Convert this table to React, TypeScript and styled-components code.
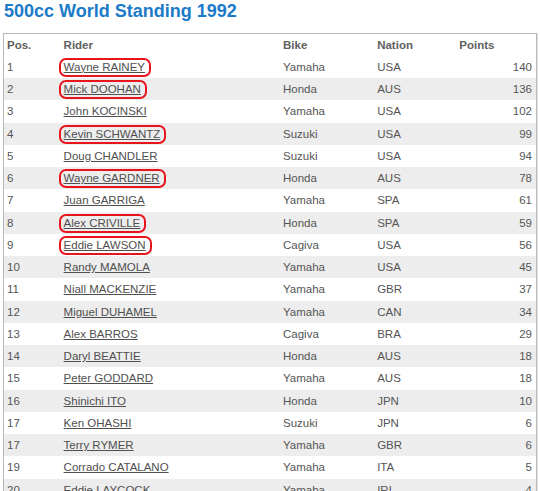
import React from "react";
import styled, { createGlobalStyle } from "styled-components";

const Global = createGlobalStyle`
  html, body { margin: 0; padding: 0; background: #fff; }
  body { font-family: "Liberation Sans", Arial, sans-serif; }
`;

const Page = styled.div`
  padding: 0 3px;
  width: 534px;
`;

const Title = styled.h1`
  margin: 0 0 11px 1px;
  font-size: 18px;
  line-height: 22px;
  font-weight: bold;
  color: #1b7bc8;
`;

const Table = styled.table`
  width: 534px;
  border-collapse: collapse;
  table-layout: fixed;
  border: 1px solid #b8b8b8;
  border-bottom: none;
  box-shadow: 1px 0 0 #e2e2e2;
  font-size: 11.5px;
  color: #555;
`;

const Row = styled.tr<{ $shade?: boolean }>`
  height: 22.25px;
  background: ${(p) => (p.$shade ? "#ededed" : "#fff")};
`;

const Th = styled.th<{ $w: number }>`
  box-sizing: border-box;
  width: ${(p) => p.$w}px;
  text-align: left;
  font-weight: bold;
  color: #606060;
  padding: 0 0 0 3px;
  line-height: 14px;
`;

const Td = styled.td<{ $right?: boolean }>`
  box-sizing: border-box;
  padding: 0 ${(p) => (p.$right ? "4px" : "0")} 0 3px;
  text-align: ${(p) => (p.$right ? "right" : "left")};
  line-height: 14px;
  white-space: nowrap;
`;

const RiderLink = styled.a<{ $marked?: boolean }>`
  position: relative;
  color: #4f4f4f;
  text-decoration: underline;
  &::after {
    content: "";
    display: ${(p) => (p.$marked ? "block" : "none")};
    position: absolute;
    left: -5px;
    right: -6px;
    top: -3px;
    bottom: -4px;
    border: 2px solid #e8141c;
    border-radius: 7px;
  }
`;

type R = [string, string, string, string, number, boolean?];

const rows: R[] = [
  ["1", "Wayne RAINEY", "Yamaha", "USA", 140, true],
  ["2", "Mick DOOHAN", "Honda", "AUS", 136, true],
  ["3", "John KOCINSKI", "Yamaha", "USA", 102],
  ["4", "Kevin SCHWANTZ", "Suzuki", "USA", 99, true],
  ["5", "Doug CHANDLER", "Suzuki", "USA", 94],
  ["6", "Wayne GARDNER", "Honda", "AUS", 78, true],
  ["7", "Juan GARRIGA", "Yamaha", "SPA", 61],
  ["8", "Alex CRIVILLE", "Honda", "SPA", 59, true],
  ["9", "Eddie LAWSON", "Cagiva", "USA", 56, true],
  ["10", "Randy MAMOLA", "Yamaha", "USA", 45],
  ["11", "Niall MACKENZIE", "Yamaha", "GBR", 37],
  ["12", "Miguel DUHAMEL", "Yamaha", "CAN", 34],
  ["13", "Alex BARROS", "Cagiva", "BRA", 29],
  ["14", "Daryl BEATTIE", "Honda", "AUS", 18],
  ["15", "Peter GODDARD", "Yamaha", "AUS", 18],
  ["16", "Shinichi ITO", "Honda", "JPN", 10],
  ["17", "Ken OHASHI", "Suzuki", "JPN", 6],
  ["17", "Terry RYMER", "Yamaha", "GBR", 6],
  ["19", "Corrado CATALANO", "Yamaha", "ITA", 5],
  ["20", "Eddie LAYCOCK", "Yamaha", "IRL", 4],
];

export default function App() {
  return (
    <Page>
      <Global />
      <Title>500cc World Standing 1992</Title>
      <Table>
        <thead>
          <Row>
            <Th $w={57}>Pos.</Th>
            <Th $w={219}>Rider</Th>
            <Th $w={94}>Bike</Th>
            <Th $w={82}>Nation</Th>
            <Th $w={80}>Points</Th>
          </Row>
        </thead>
        <tbody>
          {rows.map((r, i) => (
            <Row key={i} $shade={i % 2 === 1}>
              <Td>{r[0]}</Td>
              <Td>
                <RiderLink href="#" $marked={!!r[5]}>
                  {r[1]}
                </RiderLink>
              </Td>
              <Td>{r[2]}</Td>
              <Td>{r[3]}</Td>
              <Td $right>{r[4]}</Td>
            </Row>
          ))}
        </tbody>
      </Table>
    </Page>
  );
}
